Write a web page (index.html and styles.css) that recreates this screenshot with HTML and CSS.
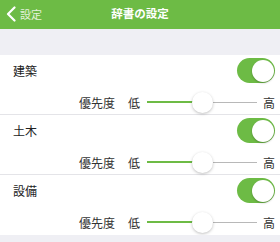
FILE: index.html
```html
<!DOCTYPE html>
<html lang="ja">
<head>
    <meta charset="UTF-8">
    <meta name="viewport" content="width=device-width, initial-scale=1.0">
    <title>辞書の設定</title>
    <link rel="stylesheet" href="styles.css">
</head>
<body>
    <header class="navbar">
        <a href="#" class="back">
            <svg class="chevron" width="10" height="16" viewBox="0 0 10 16">
                <path d="M8.5 1.5 L2 8 L8.5 14.5" fill="none" stroke="#fff" stroke-width="2.2" stroke-linecap="round" stroke-linejoin="round"/>
            </svg>
            <span>設定</span>
        </a>
        <h1 class="title">辞書の設定</h1>
    </header>

    <div class="spacer"></div>

    <div class="list">
        <div class="item">
            <div class="row">
                <span class="name">建築</span>
                <span class="switch on"><span class="knob"></span></span>
            </div>
            <div class="row priority">
                <span class="label">優先度</span>
                <span class="low">低</span>
                <span class="slider">
                    <span class="fill" style="width: 50%;"></span>
                    <span class="thumb" style="left: 50%;"></span>
                </span>
                <span class="high">高</span>
            </div>
        </div>
        <div class="item">
            <div class="row">
                <span class="name">土木</span>
                <span class="switch on"><span class="knob"></span></span>
            </div>
            <div class="row priority">
                <span class="label">優先度</span>
                <span class="low">低</span>
                <span class="slider">
                    <span class="fill" style="width: 50%;"></span>
                    <span class="thumb" style="left: 50%;"></span>
                </span>
                <span class="high">高</span>
            </div>
        </div>
        <div class="item">
            <div class="row">
                <span class="name">設備</span>
                <span class="switch on"><span class="knob"></span></span>
            </div>
            <div class="row priority">
                <span class="label">優先度</span>
                <span class="low">低</span>
                <span class="slider">
                    <span class="fill" style="width: 50%;"></span>
                    <span class="thumb" style="left: 50%;"></span>
                </span>
                <span class="high">高</span>
            </div>
        </div>
    </div>
</body>
</html>
```

FILE: styles.css
```css
body {
    font-family: "Noto Sans CJK JP", "Noto Sans", sans-serif;
    background-color: #efeff4;
    margin: 0;
    padding: 0;
    color: #222;
}

.navbar {
    position: relative;
    height: 29px;
    background-color: #6dbb45;
    display: flex;
    align-items: center;
}

.back {
    display: flex;
    align-items: center;
    gap: 4px;
    padding-left: 6px;
    color: #e4f2dc;
    text-decoration: none;
    font-size: 11px;
    margin-top: -2px;
}

.title {
    position: absolute;
    left: 0;
    right: 0;
    top: 0;
    margin: 0;
    line-height: 26px;
    text-align: center;
    color: #fff;
    font-size: 11.5px;
    font-weight: bold;
}

.spacer {
    height: 26px;
}

.list {
    background: #fff;
}

.item {
    height: 60px;
    box-sizing: border-box;
    border-bottom: 1px solid #e4e4e8;
    padding: 3px 5px 0 13px;
}

.item:last-child {
    border-bottom-color: #fff;
}

.row {
    display: flex;
    align-items: center;
    height: 25px;
}

.name {
    flex: 1;
    font-size: 12px;
}

.switch {
    position: relative;
    width: 38px;
    height: 25px;
    border-radius: 13px;
    background: #6dbb45;
}

.knob {
    position: absolute;
    right: 1px;
    top: 1.5px;
    width: 22px;
    height: 22px;
    border-radius: 50%;
    background: #fff;
    box-shadow: 0 1px 2px rgba(0, 0, 0, 0.25);
}

.priority {
    margin-top: 7px;
    height: 24px;
    justify-content: flex-end;
    font-size: 12px;
    color: #333;
}

.label {
    margin-right: 13px;
}

.low {
    margin-right: 7px;
}

.slider {
    position: relative;
    width: 110px;
    height: 1px;
    background: #b8b8b8;
    margin-right: 6px;
}

.fill {
    position: absolute;
    left: 0;
    top: -0.5px;
    height: 2px;
    background: #6dbb45;
}

.thumb {
    position: absolute;
    top: -10px;
    width: 21px;
    height: 21px;
    margin-left: -10px;
    border-radius: 50%;
    background: #fff;
    box-shadow: 0 1px 3px rgba(0, 0, 0, 0.25);
}
```
